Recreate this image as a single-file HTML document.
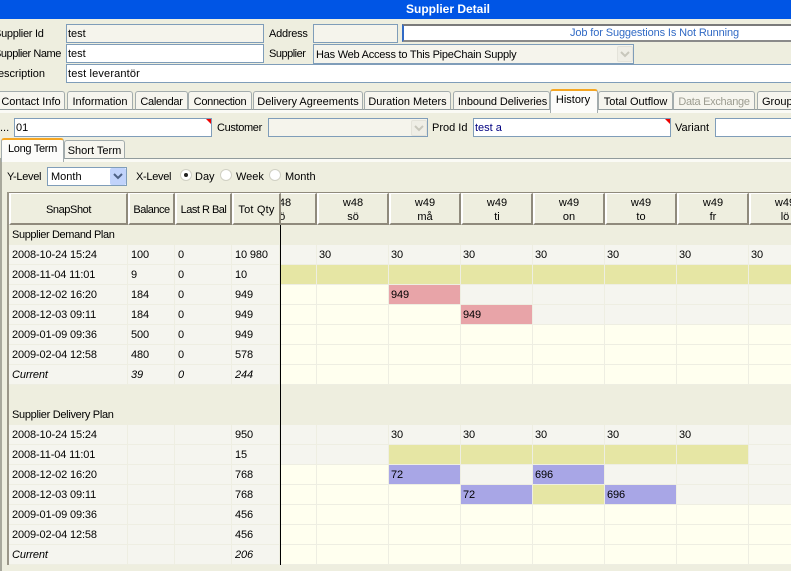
<!DOCTYPE html>
<html><head><meta charset="utf-8"><style>
html,body{margin:0;padding:0;background:#eeeedf;}
#p{position:relative;width:791px;height:571px;overflow:hidden;background:#eeeedf;font:11px/20px "Liberation Sans",sans-serif;color:#000;}
#p div{position:absolute;box-sizing:border-box;white-space:nowrap;}
.l{height:20px;line-height:22px!important;}
.i{border:1px solid #7f9db9;background:#fff;padding-left:1px;line-height:19px;height:19px;}
.g{background:#f5f4ec;}
.c:after{content:"";position:absolute;right:0;top:0;border-top:5px solid #e00;border-left:5px solid transparent;}
.t{top:91px;height:19px;background:#f6f5ee;border:1px solid #a3acad;border-bottom:1px solid #919b9c;border-radius:3px 3px 0 0;text-align:center;line-height:20px;}
.h{top:193px;height:32px;background:#eeeedf;border-top:1px solid #fff;border-left:2px solid #fff;border-right:2px solid #8f8a7c;border-bottom:2px solid #8f8a7c;text-align:center;line-height:32px;}
.w{line-height:14px;padding-top:2px;}
table{position:absolute;border-collapse:separate;border-spacing:0;table-layout:fixed;font:11px "Liberation Sans",sans-serif;letter-spacing:-.12px;}
td{height:20px;padding:1px 0 0 2px;box-sizing:border-box;border-right:1px solid #eeeee2;border-bottom:1px solid #eeeee2;white-space:nowrap;overflow:hidden;background:#f5f5ef;}
td.y{background:#ffffef;}td.o{background:#e6e6a4;}td.p{background:#e8a4a8;}td.b{background:#a8a6e6;}
td.n{background:#eeeedf;border-color:#eeeedf;padding-top:0;letter-spacing:-.38px;}
td.s{height:40px;vertical-align:bottom;padding-bottom:3px;}
#L td{padding-left:3px;}
i{font-style:italic;}
.r{width:12px;height:12px;border-radius:50%;background:#fff;border:1px solid #d0d0c4;top:169px;}
</style></head><body><div id="p">
<div style="left:0;top:0;width:791px;height:19px;background:#0055e5;color:#fff;font-weight:bold;font-size:12px;line-height:18px;padding-left:406px;">Supplier Detail</div>

<div class="l" style="left:-6px;top:23px;letter-spacing:-.27px;">Supplier Id</div>
<div class="l" style="left:-6px;top:43px;letter-spacing:-.45px;">Supplier Name</div>
<div class="l" style="left:-10px;top:63px;">Description</div>
<div class="i g" style="left:66px;top:24px;width:198px;">test</div>
<div class="i" style="left:66px;top:44px;width:198px;">test</div>
<div class="i" style="left:66px;top:64px;width:740px;letter-spacing:.15px;">test leverantör</div>
<div class="l" style="left:269px;top:23px;letter-spacing:-.25px;">Address</div>
<div class="l" style="left:269px;top:43px;letter-spacing:-.5px;">Supplier</div>
<div class="i g" style="left:313px;top:24px;width:85px;"></div>
<div style="left:402px;top:24px;width:400px;height:18px;background:#fff;border-top:2px solid #7a7a7a;border-bottom:2px solid #8a8a8a;border-left:2px solid #316ac5;line-height:14px;color:#316ac5;padding-left:166px;letter-spacing:-.12px;">Job for Suggestions Is Not Running</div>
<div class="i g" style="left:313px;top:44px;width:321px;height:20px;padding-left:2px;line-height:20px;letter-spacing:-.23px;">Has Web Access to This PipeChain Supply</div>
<div style="left:617px;top:46px;width:16px;height:16px;background:#efeee6;border:1px solid #e4e3da;border-radius:2px;"><svg width="14" height="14" style="position:absolute;left:0;top:0"><path d="M3 5l4 4 4-4" fill="none" stroke="#c8c7bc" stroke-width="2"/></svg></div>

<div style="left:0;top:109px;width:791px;height:4px;background:#fafaf5;border-top:1px solid #919b9c;"></div>
<div class="t" style="left:-3px;width:68px;">Contact Info</div>
<div class="t" style="left:67px;width:66px;">Information</div>
<div class="t" style="left:135px;width:53px;letter-spacing:-.3px;">Calendar</div>
<div class="t" style="left:188px;width:64px;letter-spacing:-.3px;">Connection</div>
<div class="t" style="left:253px;width:110px;">Delivery Agreements</div>
<div class="t" style="left:364px;width:87px;">Duration Meters</div>
<div class="t" style="left:453px;width:97px;letter-spacing:-.1px;padding-left:2px;">Inbound Deliveries</div>
<div class="t" style="left:550px;top:89px;width:48px;height:24px;background:#fcfcfa;border-top:2px solid #f5a623;border-bottom:0;line-height:18px;padding-right:2px;">History</div>
<div class="t" style="left:598px;width:75px;">Total Outflow</div>
<div class="t" style="left:673px;width:82px;color:#9c9c90;letter-spacing:-.3px;">Data Exchange</div>
<div class="t" style="left:757px;width:60px;text-align:left;padding-left:4px;">Group</div>

<div class="l" style="left:0;top:117px;">...</div>
<div class="i c" style="left:14px;top:118px;width:198px;">01</div>
<div class="l" style="left:217px;top:117px;letter-spacing:-.35px;">Customer</div>
<div class="i g" style="left:268px;top:118px;width:160px;"></div>
<div style="left:411px;top:120px;width:16px;height:16px;background:#efeee6;border:1px solid #e4e3da;border-radius:2px;"><svg width="14" height="14" style="position:absolute;left:0;top:0"><path d="M3 5l4 4 4-4" fill="none" stroke="#c8c7bc" stroke-width="2"/></svg></div>
<div class="l" style="left:432px;top:117px;">Prod Id</div>
<div class="i c" style="left:473px;top:118px;width:198px;color:#000080;">test a</div>
<div class="l" style="left:675px;top:117px;">Variant</div>
<div class="i" style="left:715px;top:118px;width:100px;"></div>

<div style="left:0;top:158px;width:791px;height:4px;background:#fafaf5;border-top:1px solid #919b9c;"></div>
<div style="left:0;top:158px;width:2px;height:413px;background:#a8a89c;"></div>
<div class="t" style="left:1px;top:138px;width:63px;height:24px;background:#fcfcfa;border-top:2px solid #f5a623;border-bottom:0;line-height:18px;letter-spacing:-.3px;">Long Term</div>
<div class="t" style="left:64px;top:140px;width:61px;height:19px;line-height:21px;">Short Term</div>

<div class="l" style="left:7px;top:166px;letter-spacing:-.3px;">Y-Level</div>
<div class="i" style="left:47px;top:167px;width:80px;height:19px;padding-left:3px;">Month</div>
<div style="left:110px;top:168px;width:16px;height:17px;background:#c1d3fb;border-radius:2px;"><svg width="16" height="17" style="position:absolute;left:0;top:0"><path d="M4 6l4 4 4-4" fill="none" stroke="#4d6185" stroke-width="2"/></svg></div>
<div class="l" style="left:136px;top:166px;letter-spacing:-.3px;">X-Level</div>
<div class="r" style="left:180px;"></div><div style="left:184px;top:173px;width:4px;height:4px;border-radius:50%;background:#222;"></div>
<div class="l" style="left:195px;top:166px;">Day</div>
<div class="r" style="left:220px;"></div>
<div class="l" style="left:236px;top:166px;">Week</div>
<div class="r" style="left:269px;"></div>
<div class="l" style="left:285px;top:166px;">Month</div>

<div style="left:7px;top:192px;width:784px;height:1px;background:#8f8a7c;"></div>
<div style="left:7px;top:192px;width:2px;height:373px;background:#9a9688;"></div>

<div class="h w" style="left:245px;width:72px;">w48<br>lö</div>
<div class="h w" style="left:317px;width:72px;">w48<br>sö</div>
<div class="h w" style="left:389px;width:72px;">w49<br>må</div>
<div class="h w" style="left:461px;width:72px;">w49<br>ti</div>
<div class="h w" style="left:533px;width:72px;">w49<br>on</div>
<div class="h w" style="left:605px;width:72px;">w49<br>to</div>
<div class="h w" style="left:677px;width:72px;">w49<br>fr</div>
<div class="h w" style="left:749px;width:72px;">w49<br>lö</div>

<table style="left:281px;top:225px;width:540px;">
<colgroup><col style="width:36px"><col style="width:72px"><col style="width:72px"><col style="width:72px"><col style="width:72px"><col style="width:72px"><col style="width:72px"><col style="width:72px"></colgroup>
<tr><td class="n" colspan="8"></td></tr>
<tr><td></td><td>30</td><td>30</td><td>30</td><td>30</td><td>30</td><td>30</td><td>30</td></tr>
<tr><td class="o"></td><td class="o"></td><td class="o"></td><td class="o"></td><td class="o"></td><td class="o"></td><td class="o"></td><td class="o"></td></tr>
<tr><td class="y"></td><td class="y"></td><td class="p">949</td><td></td><td></td><td></td><td></td><td></td></tr>
<tr><td class="y"></td><td class="y"></td><td class="y"></td><td class="p">949</td><td></td><td></td><td></td><td></td></tr>
<tr><td class="y"></td><td class="y"></td><td class="y"></td><td class="y"></td><td class="y"></td><td class="y"></td><td class="y"></td><td class="y"></td></tr>
<tr><td class="y"></td><td class="y"></td><td class="y"></td><td class="y"></td><td class="y"></td><td class="y"></td><td class="y"></td><td class="y"></td></tr>
<tr><td class="y"></td><td class="y"></td><td class="y"></td><td class="y"></td><td class="y"></td><td class="y"></td><td class="y"></td><td class="y"></td></tr>
<tr><td class="n s" colspan="8"></td></tr>
<tr><td></td><td></td><td>30</td><td>30</td><td>30</td><td>30</td><td>30</td><td></td></tr>
<tr><td></td><td></td><td class="o"></td><td class="o"></td><td class="o"></td><td class="o"></td><td class="o"></td><td></td></tr>
<tr><td class="y"></td><td class="y"></td><td class="b">72</td><td></td><td class="b">696</td><td></td><td></td><td></td></tr>
<tr><td class="y"></td><td class="y"></td><td class="y"></td><td class="b">72</td><td class="o"></td><td class="b">696</td><td></td><td></td></tr>
<tr><td class="y"></td><td class="y"></td><td class="y"></td><td class="y"></td><td class="y"></td><td class="y"></td><td class="y"></td><td class="y"></td></tr>
<tr><td class="y"></td><td class="y"></td><td class="y"></td><td class="y"></td><td class="y"></td><td class="y"></td><td class="y"></td><td class="y"></td></tr>
<tr><td class="y"></td><td class="y"></td><td class="y"></td><td class="y"></td><td class="y"></td><td class="y"></td><td class="y"></td><td class="y"></td></tr>
</table>

<div class="h" style="left:9px;width:119px;letter-spacing:-.4px;">SnapShot</div>
<div class="h" style="left:128px;width:47px;letter-spacing:-.5px;">Balance</div>
<div class="h" style="left:175px;width:57px;letter-spacing:-.5px;">Last R Bal</div>
<div class="h" style="left:232px;width:49px;letter-spacing:.2px;">Tot Qty</div>

<table id="L" style="left:9px;top:225px;width:271px;">
<colgroup><col style="width:119px"><col style="width:47px"><col style="width:57px"><col style="width:48px"></colgroup>
<tr><td class="n" colspan="4">Supplier Demand Plan</td></tr>
<tr><td>2008-10-24 15:24</td><td>100</td><td>0</td><td>10 980</td></tr>
<tr><td>2008-11-04 11:01</td><td>9</td><td>0</td><td>10</td></tr>
<tr><td>2008-12-02 16:20</td><td>184</td><td>0</td><td>949</td></tr>
<tr><td>2008-12-03 09:11</td><td>184</td><td>0</td><td>949</td></tr>
<tr><td>2009-01-09 09:36</td><td>500</td><td>0</td><td>949</td></tr>
<tr><td>2009-02-04 12:58</td><td>480</td><td>0</td><td>578</td></tr>
<tr><td><i>Current</i></td><td><i>39</i></td><td><i>0</i></td><td><i>244</i></td></tr>
<tr><td class="n s" colspan="4" style="letter-spacing:-.3px;">Supplier Delivery Plan</td></tr>
<tr><td>2008-10-24 15:24</td><td></td><td></td><td>950</td></tr>
<tr><td>2008-11-04 11:01</td><td></td><td></td><td>15</td></tr>
<tr><td>2008-12-02 16:20</td><td></td><td></td><td>768</td></tr>
<tr><td>2008-12-03 09:11</td><td></td><td></td><td>768</td></tr>
<tr><td>2009-01-09 09:36</td><td></td><td></td><td>456</td></tr>
<tr><td>2009-02-04 12:58</td><td></td><td></td><td>456</td></tr>
<tr><td><i>Current</i></td><td></td><td></td><td><i>206</i></td></tr>
</table>
<div style="left:280px;top:225px;width:1px;height:340px;background:#000;"></div>
</div></body></html>
